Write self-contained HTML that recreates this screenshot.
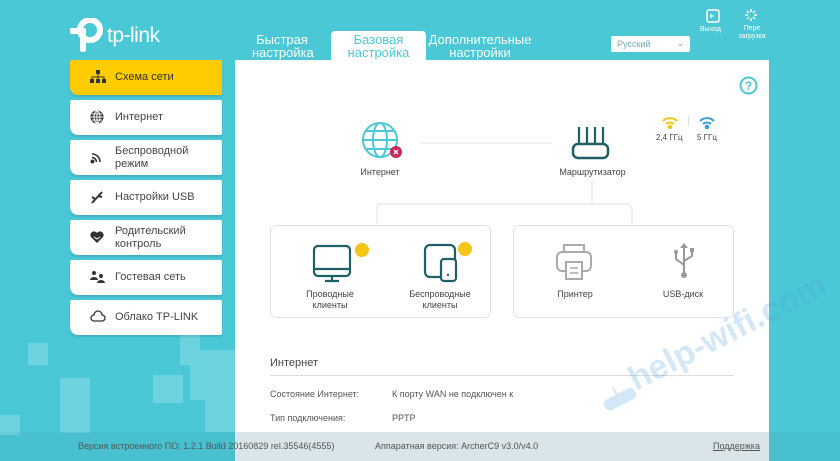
<!DOCTYPE html>
<html><head><meta charset="utf-8"><style>
*{margin:0;padding:0;box-sizing:border-box}
body{width:840px;height:461px;overflow:hidden;background:#4bc8d6;font-family:"Liberation Sans",sans-serif;position:relative;color:#333}
.a{position:absolute}
.sq{position:absolute;background:#6dd3de}
.nav{position:absolute;left:70px;width:152px;height:35px;background:#fff;border-radius:2px 2px 2px 8px;box-shadow:0 2px 2px rgba(0,0,0,.12);font-size:11px;color:#444;display:flex;align-items:center;padding-left:45px;line-height:13px}
.nav svg{position:absolute;left:20px;top:10px}
.t{font-size:9px;color:#444;text-align:center;position:absolute;line-height:11px}
</style></head><body>
<div class="sq" style="left:28px;top:343px;width:20px;height:22px"></div>
<div class="sq" style="left:0;top:415px;width:20px;height:20px"></div>
<div class="sq" style="left:60px;top:378px;width:30px;height:55px"></div>
<div class="sq" style="left:153px;top:375px;width:30px;height:28px"></div>
<div class="sq" style="left:180px;top:335px;width:20px;height:30px"></div>
<div class="sq" style="left:190px;top:350px;width:45px;height:50px"></div>
<div class="sq" style="left:205px;top:400px;width:30px;height:32px"></div>
<svg class="a" style="left:70px;top:18px" width="36" height="36" viewBox="0 0 36 36"><circle cx="20" cy="12" r="10" fill="none" stroke="#fff" stroke-width="6"/><rect x="0" y="10" width="15" height="6" fill="#fff"/><rect x="10" y="10" width="6" height="24" rx="2" fill="#fff"/></svg>
<div class="a" style="left:107px;top:24px;font-size:21px;color:#fff;letter-spacing:-0.5px">tp-link</div>
<div class="a" style="left:252px;top:33px;width:60px;font-size:13px;color:#fff;text-align:center;line-height:13px">Быстрая настройка</div>
<div class="a" style="left:331px;top:31px;width:95px;height:30px;background:#fff;border-radius:4px 4px 0 0"></div>
<div class="a" style="left:331px;top:33px;width:95px;font-size:13px;color:#4bc8d6;text-align:center;line-height:13px">Базовая настройка</div>
<div class="a" style="left:428px;top:33px;width:104px;font-size:13px;color:#fff;text-align:center;line-height:13px">Дополнительные настройки</div>
<div class="a" style="left:611px;top:36px;width:79px;height:16px;background:#fff;border-radius:2px;font-size:9px;color:#7ab;padding:3px 6px">Русский<span style="position:absolute;right:6px;top:2px;color:#8aa">&#8964;</span></div>
<svg class="a" style="left:706px;top:9px" width="14" height="14"><rect x="1" y="1" width="12" height="12" rx="2" fill="none" stroke="#fff" stroke-width="1.5"/><path d="M8 7H4M6 5L4 7 6 9" stroke="#fff" fill="none"/></svg>
<div class="a" style="left:700px;top:26px;font-size:7px;color:#fff">Выход</div>
<svg class="a" style="left:744px;top:8px" width="14" height="14" stroke="#fff" stroke-width="1.5"><path d="M7 1v3M7 10v3M1 7h3M10 7h3M3 3l2 2M9 9l2 2M11 3l-2 2M5 9l-2 2"/></svg>
<div class="a" style="left:736px;top:25px;font-size:7px;color:#fff;text-align:center;width:32px;line-height:8px">Пере загрузка</div>
<div class="nav" style="top:60px;background:#fecc00;color:#333"><svg width="16" height="14" viewBox="0 0 16 14" fill="#333"><rect x="6" y="0" width="4" height="4"/><rect x="0" y="9" width="4" height="4"/><rect x="6" y="9" width="4" height="4"/><rect x="12" y="9" width="4" height="4"/><path d="M8 4v5M2 9V7h12v2" stroke="#333" fill="none"/></svg>Схема сети</div>
<div class="nav" style="top:100px"><svg width="14" height="14" viewBox="0 0 14 14"><circle cx="7" cy="7" r="6.5" fill="#333"/><path d="M1 7h12M7 1v12M2 4h10M2 10h10" stroke="#fff" stroke-width="1"/><ellipse cx="7" cy="7" rx="3" ry="6" fill="none" stroke="#fff"/></svg>Интернет</div>
<div class="nav" style="top:140px"><svg width="14" height="14" viewBox="0 0 14 14" fill="none" stroke="#333" stroke-width="1.6"><path d="M2 4a8 8 0 0 1 8 8M2 7.5a4.5 4.5 0 0 1 4.5 4.5"/><circle cx="2.5" cy="11.5" r="1.2" fill="#333"/></svg>Беспроводной<br>режим</div>
<div class="nav" style="top:180px"><svg width="14" height="14" viewBox="0 0 14 14" stroke="#333" stroke-width="2" fill="none"><path d="M2 13l10-11M5 9l-3-2M8 6l4 1"/></svg>Настройки USB</div>
<div class="nav" style="top:220px"><svg width="14" height="14" viewBox="0 0 14 14"><path d="M7 13L1 7a3.5 3.5 0 0 1 6-4 3.5 3.5 0 0 1 6 4z" fill="#333"/><path d="M4 7l3 2 3-2" stroke="#fff" fill="none"/></svg>Родительский<br>контроль</div>
<div class="nav" style="top:260px"><svg width="16" height="14" viewBox="0 0 16 14" fill="#333"><circle cx="4" cy="3" r="2"/><circle cx="11" cy="6" r="2"/><path d="M0 10a4 3 0 0 1 8 0zM7 13a4 3 0 0 1 8 0z"/></svg>Гостевая сеть</div>
<div class="nav" style="top:300px"><svg width="16" height="12" viewBox="0 0 16 12"><path d="M4 11a3 3 0 0 1 0-6 4 4 0 0 1 8 0 3 3 0 0 1 0 6z" fill="none" stroke="#333" stroke-width="1.3"/></svg>Облако TP-LINK</div>
<div class="a" style="left:235px;top:60px;width:534px;height:372px;background:#fff"></div>
<svg class="a" style="left:739px;top:76px" width="19" height="19"><circle cx="9.5" cy="9.5" r="8" fill="none" stroke="#4bc8d6" stroke-width="2"/><text x="9.5" y="14" font-size="12" font-weight="bold" text-anchor="middle" fill="#4bc8d6" font-family="Liberation Sans">?</text></svg>
<svg class="a" style="left:662px;top:115px" width="16" height="14" fill="none" stroke="#f5c518" stroke-width="2"><path d="M1 6a10 10 0 0 1 14 0M4 9a6 6 0 0 1 8 0"/><circle cx="8" cy="12" r="1.3" fill="#f5c518"/></svg>
<div class="a" style="left:688px;top:116px;width:1px;height:10px;background:#ddd"></div>
<svg class="a" style="left:699px;top:115px" width="16" height="14" fill="none" stroke="#3aa0d8" stroke-width="2"><path d="M1 6a10 10 0 0 1 14 0M4 9a6 6 0 0 1 8 0"/><circle cx="8" cy="12" r="1.3" fill="#3aa0d8"/></svg>
<div class="a" style="left:656px;top:133px;font-size:8px;color:#444">2,4 ГГц</div>
<div class="a" style="left:697px;top:133px;font-size:8px;color:#444">5 ГГц</div>
<svg class="a" style="left:235px;top:60px" width="534" height="260" fill="none">
<circle cx="145" cy="80" r="17" stroke="#4bc8d6" stroke-width="2"/>
<ellipse cx="145" cy="80" rx="7" ry="17" stroke="#4bc8d6" stroke-width="2"/>
<path d="M128 80h34M131 71h28M131 89h28" stroke="#4bc8d6" stroke-width="2"/>
<circle cx="161" cy="92" r="6" fill="#c8285a"/>
<path d="M159 90l4 4M163 90l-4 4" stroke="#fff" stroke-width="1.3"/>
<path d="M185 83h132" stroke="#e4e4e4"/>
<path d="M344 85v-18M352 85v-18M360 85v-18M368 85v-18" stroke="#1f5f66" stroke-width="2.2"/>
<rect x="338" y="84" width="35" height="14" rx="5" stroke="#1f5f66" stroke-width="2.5"/>
<path d="M357 120v24M145 144h246a6 6 0 0 1 6 6v14M145 144h-1a4 4 0 0 0-2 2v18" stroke="#e0e0e0"/>
</svg>
<div class="t" style="left:350px;top:167px;width:60px">Интернет</div>
<div class="t" style="left:550px;top:167px;width:85px">Маршрутизатор</div>
<div class="a" style="left:270px;top:225px;width:221px;height:93px;border:1px solid #e3e3e3;border-radius:6px"></div>
<div class="a" style="left:513px;top:225px;width:221px;height:93px;border:1px solid #e3e3e3;border-radius:6px"></div>
<svg class="a" style="left:270px;top:225px" width="464" height="60" fill="none">
<rect x="44" y="21" width="36" height="30" rx="4" stroke="#1f5f66" stroke-width="2.2"/>
<path d="M44 44h36M62 51v5M55 56h14" stroke="#1f5f66" stroke-width="2.2"/>
<circle cx="92" cy="25" r="7" fill="#f5c518"/>
<rect x="155" y="20" width="30" height="32" rx="5" stroke="#1f5f66" stroke-width="2.2"/>
<rect x="171" y="34" width="15" height="22" rx="3" fill="#fff" stroke="#1f5f66" stroke-width="2.2"/>
<circle cx="178" cy="50" r="1.2" fill="#1f5f66"/>
<circle cx="195" cy="24" r="7" fill="#f5c518"/>
<path d="M294 27v-7h20v7" stroke="#aaa" stroke-width="2"/>
<rect x="287" y="27" width="34" height="19" rx="5" stroke="#aaa" stroke-width="2"/>
<rect x="296" y="37" width="16" height="17" fill="#fff" stroke="#aaa" stroke-width="2"/>
<path d="M300 43h8M300 48h8" stroke="#aaa" stroke-width="1.5"/>
<path d="M414 20v28M414 40l-8-6v-6M414 36l8-5v-5" stroke="#999" stroke-width="2"/>
<path d="M410 23l4-5 4 5z" fill="#999"/><circle cx="414" cy="50" r="3" fill="#999"/><circle cx="406" cy="27" r="2" fill="#999"/><rect x="420" y="23" width="4" height="4" fill="#999"/>
</svg>
<div class="t" style="left:290px;top:289px;width:80px">Проводные<br>клиенты</div>
<div class="t" style="left:400px;top:289px;width:80px">Беспроводные<br>клиенты</div>
<div class="t" style="left:535px;top:289px;width:80px">Принтер</div>
<div class="t" style="left:643px;top:289px;width:80px">USB-диск</div>
<div class="a" style="left:270px;top:357px;font-size:11px;color:#444">Интернет</div>
<div class="a" style="left:270px;top:375px;width:464px;height:1px;background:#ddd"></div>
<div class="a" style="left:270px;top:389px;font-size:9px;color:#555">Состояние Интернет:</div>
<div class="a" style="left:392px;top:389px;font-size:9px;color:#555">К порту WAN не подключен к</div>
<div class="a" style="left:270px;top:413px;font-size:9px;color:#555">Тип подключения:</div>
<div class="a" style="left:392px;top:413px;font-size:9px;color:#555">PPTP</div>
<div class="a" style="left:640px;top:360px;font-size:34px;font-weight:bold;color:rgba(80,160,220,.25);transform:rotate(-27deg);transform-origin:left bottom;white-space:nowrap">help-wifi.com</div>
<svg class="a" style="left:600px;top:385px;transform:rotate(-27deg)" width="40" height="24"><rect x="2" y="8" width="34" height="12" rx="5" fill="rgba(80,160,220,.25)"/><path d="M18 8V0" stroke="rgba(80,160,220,.25)" stroke-width="2"/></svg>
<div class="a" style="left:0;top:432px;width:840px;height:29px;background:rgba(60,140,160,.12)"></div>
<div class="a" style="left:235px;top:432px;width:534px;height:29px;background:#d9e5e9"></div>
<div class="a" style="left:78px;top:441px;font-size:9px;color:#555">Версия встроенного ПО: 1.2.1 Build 20160829 rel.35546(4555)</div>
<div class="a" style="left:375px;top:441px;font-size:9px;color:#555">Аппаратная версия: ArcherC9 v3.0/v4.0</div>
<div class="a" style="left:713px;top:441px;font-size:9px;color:#555;text-decoration:underline">Поддержка</div>
</body></html>
